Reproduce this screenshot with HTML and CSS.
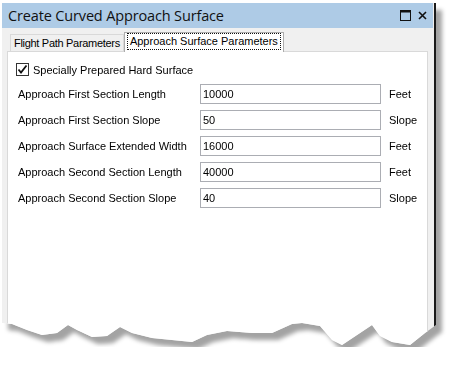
FILE: index.html
```html
<!DOCTYPE html>
<html lang="en">

<head>
    <meta charset="UTF-8">
    <title>Create Curved Approach Surface</title>
    <link rel="stylesheet" href="styles.css">
</head>

<body>
    <div class="shadow-wrap">
        <div class="window">
            <div class="title-bar">
                <span class="title">Create Curved Approach Surface</span>
                <span class="title-buttons">
                    <svg width="11" height="11" viewBox="0 0 11 11">
                        <rect x="0.5" y="0.5" width="10" height="10" fill="none" stroke="#111" stroke-width="1" />
                        <rect x="0.5" y="0.5" width="10" height="2" fill="#111" />
                    </svg>
                    <svg width="9" height="9" viewBox="0 0 9 9">
                        <path d="M1 1 L8 8 M8 1 L1 8" stroke="#111" stroke-width="1.6" />
                    </svg>
                </span>
            </div>
            <div class="window-body">
                <div class="tabs">
                    <div class="tab">Flight Path Parameters</div>
                    <div class="tab active"><span class="focus">Approach Surface Parameters</span></div>
                </div>
                <div class="tab-page">
                    <label class="check-row">
                        <span class="checkbox">
                            <svg width="11" height="11" viewBox="0 0 11 11">
                                <path d="M1.5 5.5 L4 8.5 L9.5 1.5" fill="none" stroke="#111" stroke-width="1.8" />
                            </svg>
                        </span>
                        Specially Prepared Hard Surface
                    </label>
                    <div class="form-row">
                        <span class="field-label">Approach First Section Length</span>
                        <input type="text" value="10000">
                        <span class="unit">Feet</span>
                    </div>
                    <div class="form-row">
                        <span class="field-label">Approach First Section Slope</span>
                        <input type="text" value="50">
                        <span class="unit">Slope</span>
                    </div>
                    <div class="form-row">
                        <span class="field-label">Approach Surface Extended Width</span>
                        <input type="text" value="16000">
                        <span class="unit">Feet</span>
                    </div>
                    <div class="form-row">
                        <span class="field-label">Approach Second Section Length</span>
                        <input type="text" value="40000">
                        <span class="unit">Feet</span>
                    </div>
                    <div class="form-row">
                        <span class="field-label">Approach Second Section Slope</span>
                        <input type="text" value="40">
                        <span class="unit">Slope</span>
                    </div>
                </div>
            </div>
        </div>
    </div>
</body>

</html>
```

FILE: styles.css
```css
body {
    margin: 0;
    background-color: #fff;
    font-family: "Liberation Sans", Arial, sans-serif;
    font-size: 11px;
    color: #000;
}

.shadow-wrap {
    width: 434px;
    margin: 3px 0 0 2px;
    filter: drop-shadow(6px 7px 2px rgba(0, 0, 0, 0.36));
}

.window {
    height: 344px;
    background-color: #f0f0f0;
    border-right: 2px solid #1a1a1a;
    box-sizing: border-box;
    display: flex;
    flex-direction: column;
    /* torn paper bottom edge */
    clip-path: polygon(0 0, 434px 0, 434px 322px, 423px 330px, 408px 342px, 390px 339px, 378px 333px, 370px 322px,
            355px 332px, 340px 342px, 330px 337px, 318px 323px, 300px 320px, 290px 321px, 270px 330px,
            250px 330px, 225px 328px, 205px 332px, 190px 339px, 170px 337px, 150px 335px, 130px 330px,
            118px 324px, 105px 333px, 90px 334px, 75px 327px, 66px 322px, 55px 330px, 40px 332px,
            25px 327px, 10px 321px, 0 320px);
}

.title-bar {
    height: 25px;
    margin-right: 1px;
    background-color: #aecbe6;
    display: flex;
    align-items: center;
    justify-content: space-between;
    padding: 0 6px 0 6px;
    flex-shrink: 0;
}

.title {
    font-family: "Open Sans", "Noto Sans", sans-serif;
    font-size: 14.5px;
    color: #111;
    letter-spacing: -0.15px;
}

.title-buttons {
    display: flex;
    align-items: center;
    gap: 7px;
}

.window-body {
    flex: 1;
    padding: 4px 6px 0 5px;
    display: flex;
    flex-direction: column;
}

.tabs {
    display: flex;
    align-items: flex-end;
    height: 19px;
    padding-left: 3px;
}

.tab {
    height: 16px;
    line-height: 16px;
    padding: 0 3px;
    letter-spacing: -0.3px;
    border: 1px solid #d9d9d9;
    border-bottom: none;
    background-color: #f0f0f0;
}

.tab.active {
    height: 19px;
    line-height: 17px;
    padding: 0 2px;
    margin-left: 0;
    letter-spacing: 0;
    border-color: #adadad;
    background-color: #fff;
    position: relative;
    z-index: 1;
    margin-bottom: -1px;
}

.focus {
    display: inline-block;
    line-height: 15px;
    padding: 0 2px;
    border: 1px dotted #111;
}

.tab-page {
    flex: 1;
    background-color: #fff;
    border: 1px solid #d9d9d9;
    padding: 10px 0 0 10px;
}

.check-row {
    display: flex;
    align-items: center;
    gap: 4px;
    height: 15px;
    margin: 0 0 7px -2px;
}

.checkbox {
    width: 11px;
    height: 11px;
    border: 1px solid #333;
    display: flex;
    align-items: center;
    justify-content: center;
}

.form-row {
    display: flex;
    align-items: center;
    height: 20px;
    margin-bottom: 6px;
}

.field-label {
    width: 182px;
}

.form-row input {
    width: 181px;
    height: 20px;
    box-sizing: border-box;
    border: 1px solid #abadb3;
    padding: 0 2px;
    font-family: "Liberation Sans", Arial, sans-serif;
    font-size: 11px;
    color: #000;
    margin: 0 8px 0 0;
}
```
